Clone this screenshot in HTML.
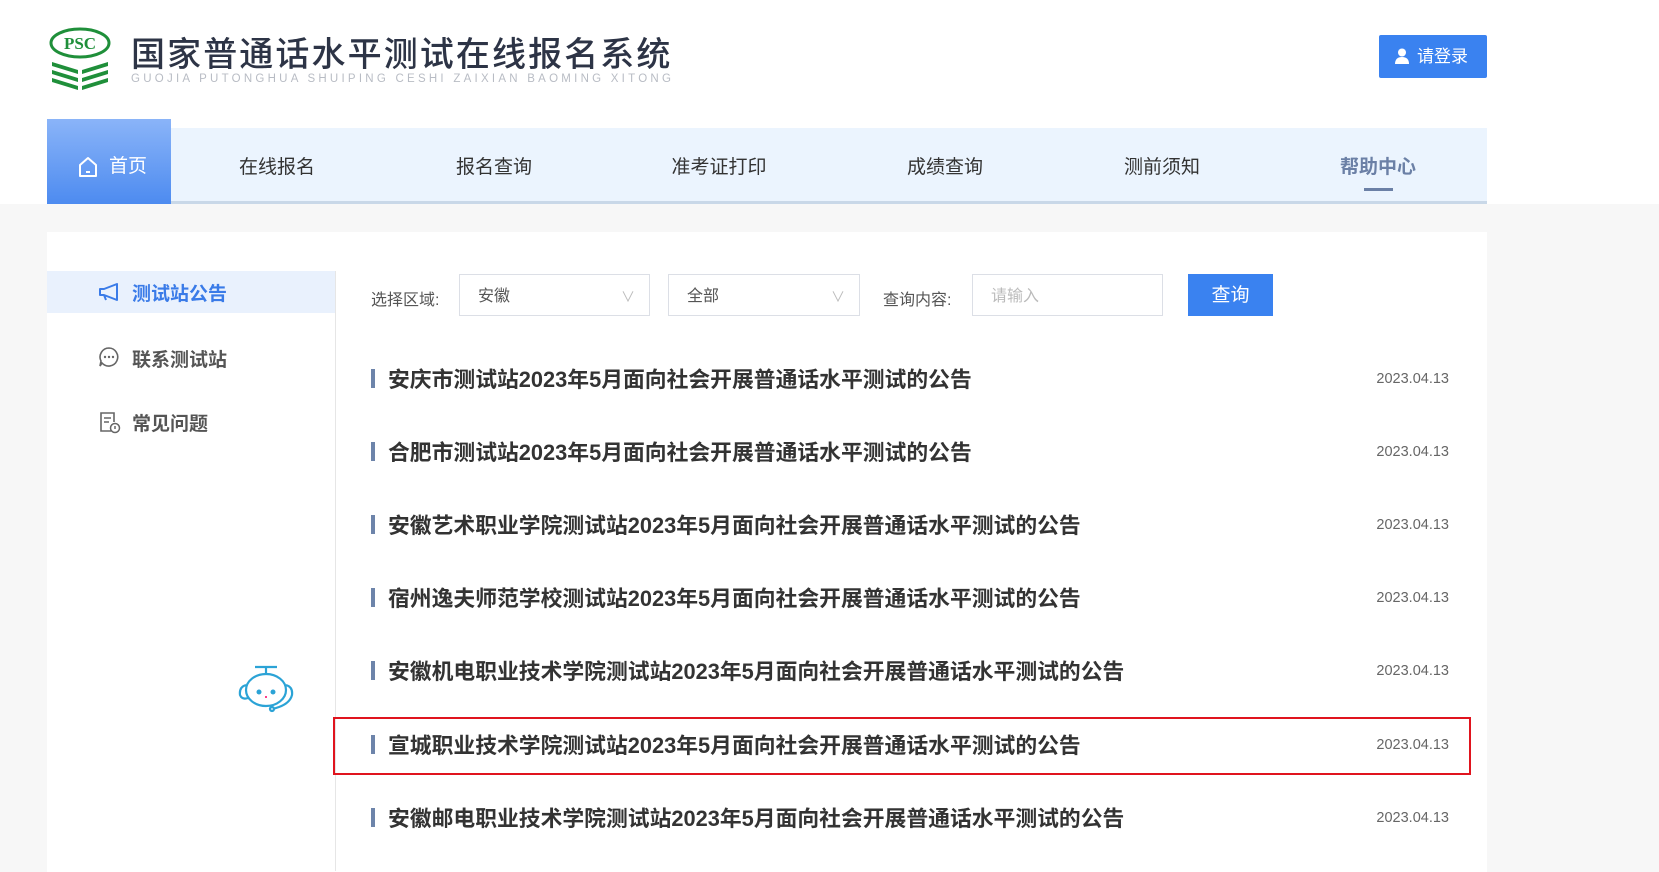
<!DOCTYPE html>
<html><head><meta charset="utf-8"><style>
*{margin:0;padding:0;box-sizing:border-box}
body{width:1659px;height:841px;overflow:hidden;background:#f7f7f7;font-family:"Liberation Sans","Noto Sans CJK SC",sans-serif;position:relative}
.top{position:absolute;left:0;top:0;width:1659px;height:204px;background:#fff}
.abs{position:absolute}
.title{left:131px;top:27px;font-size:34px;letter-spacing:2.1px;color:#2d3446;white-space:nowrap;font-weight:500}
.py{left:131px;top:73px;font-size:11.5px;letter-spacing:3.25px;color:#b8bcc4;white-space:nowrap}
.login{left:1379px;top:35px;width:108px;height:43px;background:#3a82f0;border-radius:2px;color:#fff;font-size:17px;line-height:43px;padding-left:38px}
.navbar{left:171px;top:128px;width:1316px;height:76px;background:#ebf4fe;border-bottom:3px solid #c9d8e8}
.tab{left:47px;top:119px;width:124px;height:85px;background:linear-gradient(#8ab4f8,#4d8bf0);color:#fff;font-size:19px;line-height:96px;padding-left:62px}
.nav{top:152px;font-size:19px;color:#333;transform:translateX(-50%);white-space:nowrap}
.panel{left:47px;top:232px;width:1440px;height:640px;background:#fff}
.side{left:47px;top:271px;width:288px;height:42px;background:#e9f1fd}
.vline{left:335px;top:271px;width:1px;height:600px;background:#e6e6e6}
.si{left:132px;font-size:19px;font-weight:bold;color:#555;white-space:nowrap}
.lbl{font-size:16px;color:#555;top:286px}
.sel{top:274px;height:42px;border:1px solid #dcdfe6;background:#fff;font-size:16px;color:#555;line-height:44px;padding-left:18px}
.row{left:371px;font-size:21.8px;font-weight:bold;color:#333;white-space:nowrap;padding-left:17px}
.row:before{content:"";position:absolute;left:0;top:6px;width:4px;height:19px;background:#6d84aa}
.date{right:210px;font-size:14.5px;color:#666}
</style></head><body>
<div class="top"></div>
<svg class="abs" style="left:48px;top:26px" width="64" height="64" viewBox="0 0 64 64">
<ellipse cx="32" cy="17" rx="29" ry="14" fill="none" stroke="#1f8f3a" stroke-width="3"/>
<text x="32" y="23" font-family="Liberation Serif" font-weight="bold" font-size="17" fill="#1f8f3a" text-anchor="middle">PSC</text>
<g fill="#1f8f3a"><path d="M4 36 L30 44 L30 48 L4 40Z M60 36 L34 44 L34 48 L60 40Z"/><path d="M4 44 L30 52 L30 56 L4 48Z M60 44 L34 52 L34 56 L60 48Z"/><path d="M4 52 L30 60 L30 64 L4 56Z M60 52 L34 60 L34 64 L60 56Z"/></g>
</svg>
<div class="abs title">国家普通话水平测试在线报名系统</div>
<div class="abs py">GUOJIA PUTONGHUA SHUIPING CESHI ZAIXIAN BAOMING XITONG</div>
<div class="abs login">请登录</div>
<svg class="abs" style="left:1395px;top:48px" width="14" height="16" viewBox="0 0 14 16"><circle cx="7" cy="4.5" r="4" fill="#fff"/><path d="M0 16 Q0 9 7 9 Q14 9 14 16Z" fill="#fff"/></svg>
<div class="abs navbar"></div>
<div class="abs tab">首页</div>
<svg class="abs" style="left:78px;top:156px" width="20" height="22" viewBox="0 0 20 22"><path d="M2 9 L10 2 L18 9 V20 H2Z" fill="none" stroke="#fff" stroke-width="2" stroke-linejoin="round"/><path d="M8 16 H12" stroke="#fff" stroke-width="2"/></svg>
<div class="abs nav" style="left:277px">在线报名</div>
<div class="abs nav" style="left:494px">报名查询</div>
<div class="abs nav" style="left:719px">准考证打印</div>
<div class="abs nav" style="left:945px">成绩查询</div>
<div class="abs nav" style="left:1162px">测前须知</div>
<div class="abs nav" style="left:1378px;color:#6b80a6;font-weight:bold">帮助中心</div>
<div class="abs" style="left:1364px;top:188px;width:29px;height:3px;background:#6b80a6"></div>
<div class="abs panel"></div>
<div class="abs side"></div>
<div class="abs vline"></div>
<svg class="abs" style="left:98px;top:282px" width="22" height="20" viewBox="0 0 22 20"><path d="M2 7 H6 L19 2 V18 L6 13 H2Z M6 13 L8 18" fill="none" stroke="#3a7be8" stroke-width="2" stroke-linejoin="round"/></svg>
<div class="abs si" style="top:279px;color:#3a7be8">测试站公告</div>
<svg class="abs" style="left:98px;top:346px" width="22" height="22" viewBox="0 0 22 22"><path d="M11 2 A9 9 0 1 1 4 17 L2 20 L3 15 A9 9 0 0 1 11 2Z" fill="none" stroke="#666" stroke-width="1.6"/><circle cx="7" cy="11" r="1.2" fill="#666"/><circle cx="11" cy="11" r="1.2" fill="#666"/><circle cx="15" cy="11" r="1.2" fill="#666"/></svg>
<div class="abs si" style="top:345px">联系测试站</div>
<svg class="abs" style="left:99px;top:411px" width="22" height="23" viewBox="0 0 22 23"><path d="M12 20 H2 V2 H15 V11" fill="none" stroke="#666" stroke-width="1.6"/><path d="M5 7 H12 M5 11 H10" stroke="#666" stroke-width="1.5"/><circle cx="16" cy="17" r="4.5" fill="none" stroke="#666" stroke-width="1.5"/><path d="M16 15 V18" stroke="#666" stroke-width="1.5"/></svg>
<div class="abs si" style="top:409px">常见问题</div>
<svg class="abs" style="left:235px;top:663px" width="62" height="52" viewBox="0 0 62 52"><g fill="none" stroke="#2ba3d6" stroke-width="2.2"><path d="M20 4 H42 M31 4 V10"/><ellipse cx="31" cy="27" rx="20" ry="16"/><path d="M11 22 Q4 24 5 32 Q7 37 13 35 M51 22 Q58 24 57 32 Q55 40 44 44 L38 46"/><circle cx="37" cy="46" r="2"/></g><circle cx="24" cy="29" r="2.5" fill="#2ba3d6"/><circle cx="38" cy="29" r="2.5" fill="#2ba3d6"/><circle cx="31" cy="34" r="1" fill="#f06"/></svg>
<div class="abs lbl" style="left:371px">选择区域:</div>
<div class="abs sel" style="left:459px;width:191px">安徽<span style="position:absolute;right:14px;color:#bbb;font-size:14px">&#8744;</span></div>
<div class="abs sel" style="left:668px;width:192px">全部<span style="position:absolute;right:14px;color:#bbb;font-size:14px">&#8744;</span></div>
<div class="abs lbl" style="left:883px">查询内容:</div>
<div class="abs sel" style="left:972px;width:191px;color:#bbb">请输入</div>
<div class="abs" style="left:1188px;top:274px;width:85px;height:42px;background:#3a82f0;color:#fff;font-size:19px;line-height:44px;text-align:center">查询</div>
<div class="abs row" style="top:363px">安庆市测试站2023年5月面向社会开展普通话水平测试的公告</div>
<div class="abs date" style="top:371px">2023.04.13</div>
<div class="abs row" style="top:436px">合肥市测试站2023年5月面向社会开展普通话水平测试的公告</div>
<div class="abs date" style="top:444px">2023.04.13</div>
<div class="abs row" style="top:509px">安徽艺术职业学院测试站2023年5月面向社会开展普通话水平测试的公告</div>
<div class="abs date" style="top:517px">2023.04.13</div>
<div class="abs row" style="top:582px">宿州逸夫师范学校测试站2023年5月面向社会开展普通话水平测试的公告</div>
<div class="abs date" style="top:590px">2023.04.13</div>
<div class="abs row" style="top:655px">安徽机电职业技术学院测试站2023年5月面向社会开展普通话水平测试的公告</div>
<div class="abs date" style="top:663px">2023.04.13</div>
<div class="abs row" style="top:729px">宣城职业技术学院测试站2023年5月面向社会开展普通话水平测试的公告</div>
<div class="abs date" style="top:737px">2023.04.13</div>
<div class="abs row" style="top:802px">安徽邮电职业技术学院测试站2023年5月面向社会开展普通话水平测试的公告</div>
<div class="abs date" style="top:810px">2023.04.13</div>
<div class="abs" style="left:333px;top:717px;width:1138px;height:58px;border:2px solid #e0141e"></div>
</body></html>
